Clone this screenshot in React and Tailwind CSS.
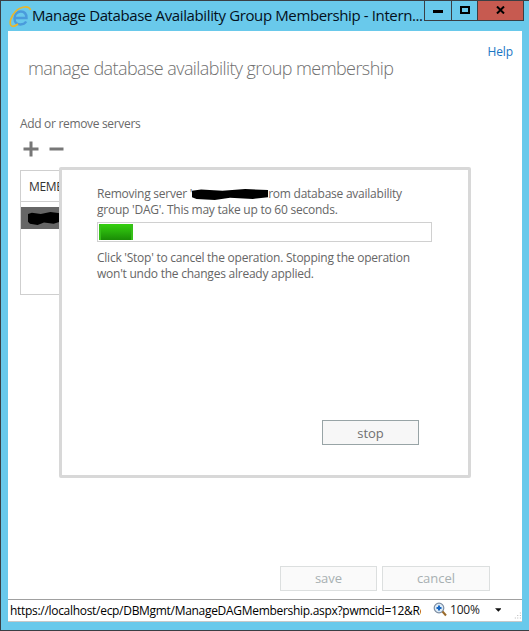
import React from "react";

const IeIcon = () => (
  <svg width="23" height="24" viewBox="0 0 23 24" className="shrink-0">
    <path d="M5.5 14H17.5C17.5 9.5 15 7.5 11.8 7.5C8 7.5 5.5 10.5 5.5 14.5C5.5 18.5 8.2 20.5 11.5 20.5C14 20.5 16 19.5 17.2 17.5" fill="none" stroke="#4a9bdc" strokeWidth="2.4" />
    <path d="M21.5 6C20 1.5 12 2 6.5 7.5C2 12 0 19 2 21.5C3.5 23 6.5 22 9 20" fill="none" stroke="#eab62a" strokeWidth="1.7" />
  </svg>
);

const Scribble = ({ width, height }) => (
  <svg width={width} height={height} viewBox="0 0 100 20" preserveAspectRatio="none" className="inline-block align-middle">
    <path d="M0 3L12 1L40 3L70 0L100 2L100 15L80 18L50 16L30 20L6 18L0 15Z" fill="#000" />
  </svg>
);

const App = () => {
  return (
    <div className="w-[529px] h-[631px] flex flex-col bg-[#69c9eb] border-l border-t border-b border-[#3a3f44] overflow-hidden font-['Open_Sans','Liberation_Sans',sans-serif]">
      {/* Title bar */}
      <div className="h-[30px] flex items-start shrink-0">
        <div className="pl-[8px] pt-[2px] flex items-center flex-1 min-w-0">
          <IeIcon />
          <span className="text-[15px] leading-[25px] text-[#04101c] tracking-[-0.38px] whitespace-nowrap">
            Manage Database Availability Group Membership - Intern...
          </span>
        </div>
        <div className="w-[100px] h-[21px] mr-[5px] -mt-[1px] flex border border-t-0 border-[#3a3f44] shrink-0">
          <div className="w-[27px] border-r border-[#3a3f44] flex items-center justify-center">
            <div className="w-[10px] h-[3px] mt-[3px] bg-black"></div>
          </div>
          <div className="w-[26px] border-r border-[#3a3f44] flex items-center justify-center">
            <div className="w-[10px] h-[8px] border-2 border-black"></div>
          </div>
          <div className="flex-1 bg-[#c75a50] flex items-center justify-center">
            <svg width="9" height="8" viewBox="0 0 9 8">
              <path d="M1 0.5L8 7.5M8 0.5L1 7.5" stroke="#000" strokeWidth="2" />
            </svg>
          </div>
        </div>
      </div>

      {/* Page */}
      <div className="relative ml-[7px] w-[514px] h-[568px] bg-white shrink-0">
        <div className="flex justify-end pt-[12px] pr-[9px]">
          <span className="text-[12px] leading-[17px] tracking-[-0.1px] text-[#1a76c4]">Help</span>
        </div>
        <h1 className="pl-[20px] -mt-[4px] text-[18px] leading-[24px] font-light tracking-[-0.58px] text-[#707070]">
          manage database availability group membership
        </h1>
        <p className="pl-[12px] mt-[36px] text-[12px] leading-[16px] tracking-[-0.32px] text-[#6a6a6a]">Add or remove servers</p>
        <div className="pl-[15px] mt-[9px] flex gap-[10px] items-center">
          <svg width="16" height="16" viewBox="0 0 16 16">
            <path d="M0.5 8H15.5M8 0.5V15.5" stroke="#777" strokeWidth="3" />
          </svg>
          <svg width="15" height="16" viewBox="0 0 15 16">
            <path d="M0.5 8H14.5" stroke="#777" strokeWidth="3" />
          </svg>
        </div>

        {/* Members table */}
        <div className="ml-[12px] mt-[13px] w-[420px] h-[125px] border border-[#cfcfcf]">
          <div className="h-[31px] border-b border-[#cfcfcf] pl-[8px] text-[12px] leading-[31px] tracking-[-0.3px] text-[#333]">MEMBER</div>
          <div className="mt-[5px] h-[22px] bg-[#666] pl-[7px] flex items-center">
            <Scribble width={32} height={13} />
          </div>
        </div>

        {/* Progress dialog */}
        <div className="absolute left-[51px] top-[136px] w-[412px] h-[311px] bg-white border-[3px] border-[#d8d8d8] rounded-[2px] pt-[16px] pl-[35px] pr-[36px]">
          <p className="text-[12px] leading-[16px] tracking-[-0.24px] text-[#666] whitespace-nowrap">
            Removing server '<Scribble width={76} height={11} />rom database availability
          </p>
          <p className="text-[12px] leading-[16px] tracking-[-0.24px] text-[#666] whitespace-nowrap">group 'DAG'. This may take up to 60 seconds.</p>
          <div className="mt-[4px] w-[335px] h-[20px] border border-[#d0d0d0] p-[1px]">
            <div className="w-[34px] h-full bg-gradient-to-b from-[#35d010] via-[#28b00c] to-[#1a8c06] border-x-2 border-x-[#36c018]"></div>
          </div>
          <p className="mt-[8px] text-[12px] leading-[16px] tracking-[-0.24px] text-[#666] whitespace-nowrap">
            Click 'Stop' to cancel the operation. Stopping the operation
          </p>
          <p className="text-[12px] leading-[16px] tracking-[-0.24px] text-[#666] whitespace-nowrap">won't undo the changes already applied.</p>
          <div className="flex justify-end mt-[138px] pr-[13px]">
            <button className="w-[97px] h-[25px] bg-[#f7f7f7] border border-[#98a4a6] text-[13px] leading-[22px] text-[#707070]">stop</button>
          </div>
        </div>

        {/* Footer buttons */}
        <div className="absolute right-[32px] bottom-[8px] flex gap-[5px]">
          <button className="w-[97px] h-[25px] pb-[1px] bg-[#fafafa] border border-[#dcdfdf] text-[13px] leading-[21px] text-[#a8b0b2]">save</button>
          <button className="w-[108px] h-[25px] pb-[1px] bg-[#fafafa] border border-[#dcdfdf] text-[13px] leading-[21px] text-[#a8b0b2]">cancel</button>
        </div>
      </div>

      {/* Status bar */}
      <div className="ml-[7px] w-[514px] h-[23px] bg-white border-t border-[#a0a0a0] border-b border-b-[#c8c8c8] shrink-0 flex items-center overflow-hidden text-[12px] text-black">
        <span className="w-[413px] shrink-0 pl-[2px] overflow-hidden whitespace-nowrap tracking-[-0.3px]">
          https://localhost/ecp/DBMgmt/ManageDAGMembership.aspx?pwmcid=12&Re
        </span>
        <svg width="14" height="15" viewBox="0 0 14 15" className="ml-[12px] -mt-[2px] shrink-0">
          <circle cx="6" cy="6" r="4.8" fill="#dcebf7" stroke="#7d8ca0" strokeWidth="1.2" />
          <path d="M3.5 6H8.5M6 3.5V8.5" stroke="#1766c2" strokeWidth="2" />
          <path d="M9.5 9.5L13 13.5" stroke="#9a6a2a" strokeWidth="2" />
        </svg>
        <span className="ml-[3px] -mt-[2px] tracking-[-0.2px] text-[#222]">100%</span>
        <svg width="8" height="4" viewBox="0 0 8 4" className="ml-[15px] -mt-[1px]">
          <path d="M0 0H8L4 4Z" fill="#111" />
        </svg>
        <svg width="9" height="9" viewBox="0 0 9 9" className="ml-[13px] mt-[10px]">
          <path d="M7 1h1v1H7zM4 4h1v1H4zM7 4h1v1H7zM1 7h1v1H1zM4 7h1v1H4zM7 7h1v1H7z" fill="#aaa" />
        </svg>
      </div>
    </div>
  );
};

export default App;
